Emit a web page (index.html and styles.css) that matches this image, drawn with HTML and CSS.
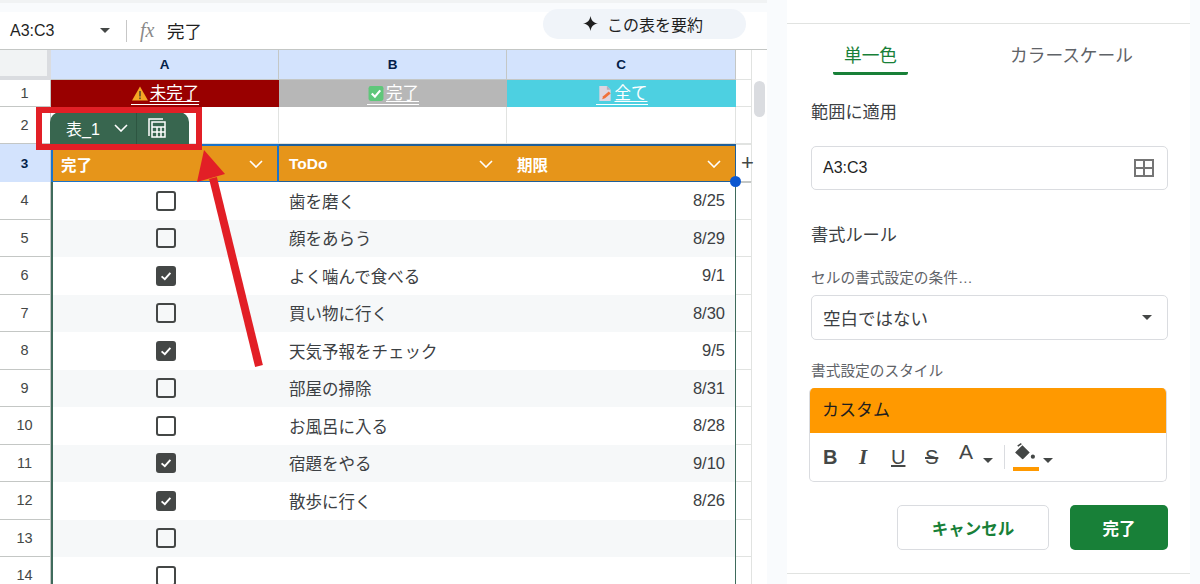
FILE: index.html
```html
<!DOCTYPE html>
<html lang="ja">
<head>
<meta charset="utf-8">
<title>条件付き書式</title>
<link rel="stylesheet" href="styles.css">
</head>
<body>
<div class="app">
  <main class="main">
    <div class="top-band"></div>
    <div class="formula-bar">
      <span class="name-box">A3:C3</span>
      <span class="caret name-caret"></span>
      <span class="fbar-sep"></span>
      <span class="fx">fx</span>
      <span class="formula-text">完了</span>
      <span class="summary-pill">
        <svg class="star" viewBox="0 0 16 16"><path d="M8 0 C8.8 4.8 11.2 7.2 16 8 C11.2 8.8 8.8 11.2 8 16 C7.2 11.2 4.8 8.8 0 8 C4.8 7.2 7.2 4.8 8 0Z"/></svg>
        この表を要約
      </span>
    </div>
    <div class="sheet">
      <div class="row col-head">
        <div class="rh corner"></div>
        <div class="ch">A</div><div class="ch">B</div><div class="ch">C</div>
        <div class="rest"></div>
      </div>
      <div class="row r1">
        <div class="rh">1</div>
        <div class="cell link red">
          <a><svg class="emoji" viewBox="0 0 18 16"><path d="M9 1 17 15H1Z" fill="#f5a623"/><rect x="8.2" y="5.5" width="1.6" height="5.5" fill="#5a4a30"/><rect x="8.2" y="12" width="1.6" height="1.6" fill="#5a4a30"/></svg>未完了</a>
        </div>
        <div class="cell link gray">
          <a><svg class="emoji" viewBox="0 0 16 16"><rect x="1" y="1" width="14" height="14" rx="2" fill="#5fc77a"/><path d="M4 8l3 3 5-6" fill="none" stroke="#fff" stroke-width="2"/></svg>完了</a>
        </div>
        <div class="cell link cyan">
          <a><svg class="emoji" viewBox="0 0 16 18"><path d="M2 1h8l4 4v12H2Z" fill="#ded5e0"/><path d="M10 1l4 4h-4Z" fill="#b9aebd"/><path d="M5 15l1-3 6-5 2 2-6 5Z" fill="#f0703a"/></svg>全て</a>
        </div>
        <div class="rest"></div>
      </div>
      <div class="row r2">
        <div class="rh">2</div>
        <div class="cell"></div><div class="cell"></div><div class="cell"></div>
        <div class="rest"></div>
      </div>
      <div class="row r3">
        <div class="rh active">3</div>
        <div class="thead first"><span>完了</span><svg class="chev" viewBox="0 0 14 8"><path d="M1 1l6 6 6-6"/></svg></div>
        <div class="thead"><span>ToDo</span><svg class="chev" viewBox="0 0 14 8"><path d="M1 1l6 6 6-6"/></svg></div>
        <div class="thead last"><span>期限</span><svg class="chev" viewBox="0 0 14 8"><path d="M1 1l6 6 6-6"/></svg></div>
        <div class="rest plus">+</div>
      </div>
      <div class="row t"><div class="rh">4</div><div class="cell check"><span class="box"></span></div><div class="cell">歯を磨く</div><div class="cell date">8/25</div><div class="rest"></div></div>
      <div class="row t band"><div class="rh">5</div><div class="cell check"><span class="box"></span></div><div class="cell">顔をあらう</div><div class="cell date">8/29</div><div class="rest"></div></div>
      <div class="row t"><div class="rh">6</div><div class="cell check"><span class="box on"><svg viewBox="0 0 20 20"><path d="M4.5 10.5l4 3.5 7-8"/></svg></span></div><div class="cell">よく噛んで食べる</div><div class="cell date">9/1</div><div class="rest"></div></div>
      <div class="row t band"><div class="rh">7</div><div class="cell check"><span class="box"></span></div><div class="cell">買い物に行く</div><div class="cell date">8/30</div><div class="rest"></div></div>
      <div class="row t"><div class="rh">8</div><div class="cell check"><span class="box on"><svg viewBox="0 0 20 20"><path d="M4.5 10.5l4 3.5 7-8"/></svg></span></div><div class="cell">天気予報をチェック</div><div class="cell date">9/5</div><div class="rest"></div></div>
      <div class="row t band"><div class="rh">9</div><div class="cell check"><span class="box"></span></div><div class="cell">部屋の掃除</div><div class="cell date">8/31</div><div class="rest"></div></div>
      <div class="row t"><div class="rh">10</div><div class="cell check"><span class="box"></span></div><div class="cell">お風呂に入る</div><div class="cell date">8/28</div><div class="rest"></div></div>
      <div class="row t band"><div class="rh">11</div><div class="cell check"><span class="box on"><svg viewBox="0 0 20 20"><path d="M4.5 10.5l4 3.5 7-8"/></svg></span></div><div class="cell">宿題をやる</div><div class="cell date">9/10</div><div class="rest"></div></div>
      <div class="row t"><div class="rh">12</div><div class="cell check"><span class="box on"><svg viewBox="0 0 20 20"><path d="M4.5 10.5l4 3.5 7-8"/></svg></span></div><div class="cell">散歩に行く</div><div class="cell date">8/26</div><div class="rest"></div></div>
      <div class="row t band"><div class="rh">13</div><div class="cell check"><span class="box"></span></div><div class="cell"></div><div class="cell date"></div><div class="rest"></div></div>
      <div class="row t"><div class="rh">14</div><div class="cell check"><span class="box"></span></div><div class="cell"></div><div class="cell date"></div><div class="rest"></div></div>

      <div class="scroll-thumb"></div>
      <div class="sel-dot"></div>
      <div class="table-tab">
        <span class="tab-name">表_1<svg class="chev tab-chev" viewBox="0 0 14 8"><path d="M1 1l6 6 6-6"/></svg></span>
        <span class="tab-icon"><svg viewBox="0 0 22 22"><path d="M4 19V2h14M7 5h13v15H7ZM7 10h13M7 15h13M12 10v10M16 10v10"/></svg></span>
      </div>
      <div class="red-box"></div>
    </div>
    <svg class="arrow" viewBox="0 0 100 240"><path d="M67 230 21 42" stroke="#e21f26" stroke-width="8" fill="none"/><path d="M12 14 5 46 33 38Z" fill="#e21f26"/></svg>
  </main>

  <aside class="panel">
    <div class="tabs">
      <span class="tab selected">単一色</span>
      <span class="tab">カラースケール</span>
    </div>
    <h3 class="h-range">範囲に適用</h3>
    <div class="field range">
      <span class="range-text">A3:C3</span>
      <svg class="grid-ico" viewBox="0 0 20 18"><path d="M1 1h18v16H1ZM1 9h18M10 1v16"/></svg>
    </div>
    <h3 class="h-rule">書式ルール</h3>
    <div class="label l-cond">セルの書式設定の条件…</div>
    <div class="field select"><span>空白ではない</span><span class="caret"></span></div>
    <div class="label l-style">書式設定のスタイル</div>
    <div class="style-box">
      <div class="preview">カスタム</div>
      <div class="style-tools">
        <span class="tool b">B</span>
        <span class="tool i">I</span>
        <span class="tool u">U</span>
        <span class="tool s">S</span>
        <span class="tool a">A</span>
        <span class="caret small"></span>
        <span class="tool-sep"></span>
        <span class="fill">
          <svg viewBox="0 0 22 18"><path d="M2 9 9 2l7 7-6 6a1 1 0 0 1-1.500 0Z" fill="#444746"/><path d="M4.500 3 8 0.500" stroke="#444746" stroke-width="1.500"/><circle cx="19" cy="13" r="2" fill="#444746"/></svg>
          <i class="fill-bar"></i>
        </span>
        <span class="caret small"></span>
      </div>
    </div>
    <div class="actions">
      <button class="btn cancel">キャンセル</button>
      <button class="btn ok">完了</button>
    </div>
  </aside>
</div>
</body>
</html>
```
FILE: styles.css
```css
* { box-sizing: border-box; }
html, body { margin: 0; height: 100%; overflow: hidden; }
body {
  font-family: "Liberation Sans", "Noto Sans CJK JP", sans-serif;
  color: #3c4043;
  background: #f9fbfd;
}
.app { display: flex; width: 1200px; height: 584px; }

/* left: spreadsheet */
.main { position: relative; width: 767px; margin-right: 20px; flex: none; background: #fff; }
.top-band { height: 12px; background: #f9fbfd; border-top: 3px solid #f1f3f4; }
.formula-bar { height: 37px; display: flex; align-items: center; background: #fff; padding-left: 10px; }
.name-box { width: 90px; font-size: 16px; color: #1f1f1f; }
.caret { width: 0; height: 0; border: 5px solid transparent; border-top: 5px solid #444746; border-bottom: 0; display: inline-block; }
.fbar-sep { width: 1px; height: 22px; background: #c7c7c7; margin-left: 16px; }
.fx { font: italic 20px "Liberation Serif", serif; color: #8a8a8a; margin-left: 13px; width: 27px; }
.formula-text { font-size: 17.500px; color: #1f1f1f; }
.summary-pill {
  margin-left: 341px; margin-top: -14px; width: 203px; height: 30px; border-radius: 15px; background: #f0f4f9;
  display: flex; align-items: center; padding-left: 40px; font-size: 16px; color: #1f1f1f; gap: 9px;
}
.star { width: 15px; height: 15px; fill: #1f1f1f; }

.sheet { position: relative; border-top: 1px solid #c4c7c5; }
.row { display: grid; grid-template-columns: 51px 228px 228px 229px 16px; width: 752px; }
.rest { border-right: 1px solid #e1e3e1; border-bottom: 1px solid #e1e3e1; }
.rh {
  display: flex; align-items: center; justify-content: center; padding-right: 1px;
  font-size: 14.500px; color: #444746; background: #fff;
  border-right: 1px solid #c4c7c5; border-bottom: 1px solid #c4c7c5;
}
.corner { background: #f1f3f4; border-right: 4px solid #dadce0; border-bottom: 4px solid #dadce0; }
.col-head { height: 30px; }
.ch {
  display: flex; align-items: center; justify-content: center; background: #d3e3fd;
  font-size: 13.500px; font-weight: 700; color: #041e49;
  border-right: 1px solid #c4c7c5; border-bottom: 1px solid #c4c7c5;
}
.cell { display: flex; align-items: center; padding-left: 10px; font-size: 16.500px; color: #3c4043; border-right: 1px solid #e1e3e1; border-bottom: 1px solid #e1e3e1; }
.r1 { height: 27px; }
.r2 { height: 37px; }
.r1 .cell { justify-content: center; padding: 0; border: 0; color: #fff; }
.link a { display: inline-flex; align-items: center; text-decoration: underline; text-underline-offset: 2px; border-bottom: 1px solid #fff; line-height: 21px; }
.emoji { width: 18px; height: 17px; margin-right: 1px; }
.red { background: #990000; }
.gray { background: #b7b7b7; }
.cyan { background: #4dd0e1; }

.r3 { height: 38px; }
.rh.active { background: #d3e3fd; color: #041e49; font-weight: 700; font-size: 13.500px; }
.thead {
  display: flex; align-items: center; justify-content: space-between; padding: 0 14px 0 10px;
  background: #e6951a; color: #fff; font-size: 15.500px; font-weight: 700;
  border-top: 2px solid #1f5f99; border-bottom: 2px solid #1f5f99;
}
.thead.first { border: 2px solid #1a73c9; padding-left: 8px; }
.thead.last { border-right: 1px solid #1f5f99; }
.chev { width: 14px; height: 8px; fill: none; stroke: #fff; stroke-width: 1.600; }
.plus { font-size: 22px; line-height: 36px; text-align: center; color: #444746; border-top: 1px solid #e1e3e1; border-bottom: 2px solid #c4c7c5; padding-left: 5px; }

.t { height: 37.500px; }
.t .cell { border: 0; background: #fff; }
.t.band .cell { background: #f6f8f9; }
.t .check { justify-content: center; padding: 0; border-left: 2px solid #3f6b5c; }
.t .date { justify-content: flex-end; padding-right: 10px; border-right: 1px solid #3f6b5c; }
.box { width: 20px; height: 20px; border: 2px solid #444746; border-radius: 3px; display: block; }
.box.on { background: #444746; }
.box svg { display: block; width: 16px; height: 16px; fill: none; stroke: #fff; stroke-width: 2.400; }
.t .rh { margin-right: 0; }

.scroll-thumb { position: absolute; left: 754px; top: 31px; width: 11px; height: 36px; border-radius: 6px; background: #dadce0; }
.sel-dot { position: absolute; left: 730px; top: 126px; width: 11px; height: 11px; border-radius: 50%; background: #0b57d0; }
.table-tab {
  position: absolute; left: 50px; top: 62px; width: 139px; height: 32px; border-radius: 10px 10px 0 0;
  background: #38664f; color: #fff; display: flex; font-size: 16px;
}
.tab-name { width: 87px; display: flex; align-items: center; padding-left: 16px; gap: 14px; border-right: 1px solid #2d5541; }
.tab-icon { flex: 1; display: flex; align-items: center; justify-content: center; padding-right: 14px; }
.tab-icon svg { width: 22px; height: 22px; fill: none; stroke: #fff; stroke-width: 1.500; }
.red-box { position: absolute; left: 36px; top: 57px; width: 166px; height: 43px; border: 6px solid #e21f26; }
.arrow { position: absolute; left: 192px; top: 136px; width: 100px; height: 240px; }

/* right: panel */
.panel { width: 403px; flex: none; background: #fff; position: relative; display: flex; flex-direction: column; border-top: 0; padding: 0 22px 0 24px; }
.panel::before { content: ""; display: block; position: absolute; left: 0; right: 0; top: 23px; height: 1px; background: #e1e3e1; }
.panel::after { content: ""; display: block; position: absolute; left: 0; right: 0; top: 573px; height: 1px; background: #e1e3e1; }
.tabs { display: flex; height: 51px; margin-top: 24px; font-size: 17.700px; color: #5f6368; }
.tab { display: block; padding-top: 17px; }
.tab.selected { color: #188038; width: 75px; text-align: center; margin: 0 102px 0 22px; height: 51px; border-bottom: 3px solid #188038; border-radius: 0 0 2px 2px; }
h3 { margin: 0; font-weight: 400; font-size: 17.200px; color: #3c4043; }
.h-range { margin-top: 25px; line-height: 24px; }
.field { border: 1px solid #dadce0; border-radius: 5px; width: 357px; display: flex; align-items: center; justify-content: space-between; padding: 0 10px 0 11px; color: #1f1f1f; }
.range { margin-top: 22px; height: 44px; padding-right: 13px; font-size: 16px; }
.grid-ico { width: 20px; height: 18px; fill: none; stroke: #757575; stroke-width: 2; }
.h-rule { margin-top: 33px; line-height: 24px; }
.label { font-size: 14.700px; color: #5f6368; line-height: 20px; }
.l-cond { margin-top: 21px; }
.select { margin-top: 7px; height: 45px; font-size: 17.500px; color: #3c4043; padding-right: 15px; }
.l-style { margin-top: 21px; }
.style-box { margin: 7px 0 0 -2px; width: 358px; height: 94px; border: 1px solid #dadce0; border-top: 0; border-radius: 5px; overflow: hidden; }
.preview { height: 45px; background: #ff9900; font-size: 17px; color: #1f1f1f; padding: 11px 0 0 12px; line-height: 24px; }
.style-tools { display: flex; align-items: center; height: 48px; padding-left: 13px; }
.tool { font-size: 20px; color: #444746; width: 34px; line-height: 24px; }
.tool.b { font-weight: 700; }
.tool.i { font-family: "Liberation Serif", serif; font-style: italic; font-weight: 700; font-size: 21px; padding-left: 2px; }
.tool.u { text-decoration: underline; }
.tool.s { text-decoration: line-through; }
.tool.a { width: 24px; margin-top: -11px; padding-left: 0; font-size: 21px; }
.caret.small { margin-top: 6px; }
.tool-sep { width: 1px; height: 24px; background: #dadce0; margin: 0 8px 0 11px; }
.fill { display: flex; flex-direction: column; width: 28px; margin-right: 2px; }
.fill svg { width: 23px; height: 19px; }
.fill-bar { display: block; width: 26px; height: 4px; background: #ff9900; margin-top: 5px; }
.actions { display: flex; gap: 21px; justify-content: flex-end; margin-top: 23px; width: 357px; }
.btn { height: 45px; border-radius: 5px; font: 700 16.500px "Liberation Sans", "Noto Sans CJK JP", sans-serif; }
.cancel { width: 152px; background: #fff; border: 1px solid #dadce0; color: #188038; }
.ok { width: 98px; background: #188038; border: 0; color: #fff; }
```
